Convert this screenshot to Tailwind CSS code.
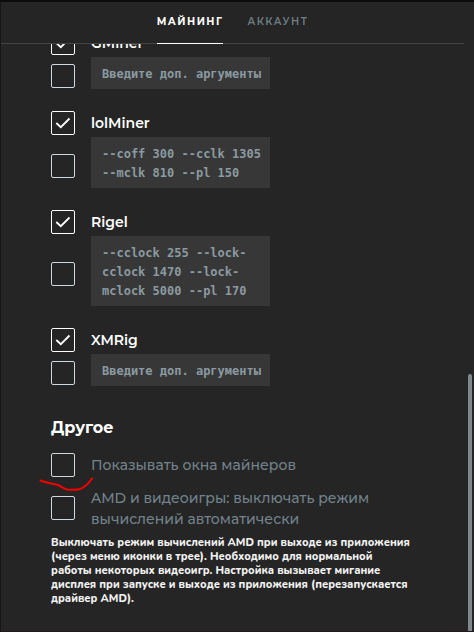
<!DOCTYPE html>
<html lang="ru">
<head>
<meta charset="utf-8">
<meta name="viewport" content="width=device-width, initial-scale=1">
<title>Настройки майнинга</title>
<script src="https://cdn.jsdelivr.net/npm/@tailwindcss/browser@4"></script>
</head>
<body class="bg-[#252525] font-['Montserrat','Inter',sans-serif] text-white">
<div class="relative flex h-screen flex-col overflow-hidden border-t-2 border-b border-l border-t-[#0b0b0b] border-b-[#21181b] border-l-[#171717]">
  <div class="absolute -top-0.5 right-20 h-0.5 w-3 rounded-t bg-[#252525]"></div>

  <header class="mr-2.5 shrink-0 border-b border-[#434343]">
    <nav class="-mb-px flex justify-center gap-6 text-[10px] leading-4 font-bold tracking-[0.15em]">
      <a href="#mining" class="border-b border-white pt-3 pb-[13px]">МАЙНИНГ</a>
      <a href="#account" class="pt-3 pb-[13px] font-semibold text-[#6f7f87]">АККАУНТ</a>
    </nav>
  </header>

  <main class="min-h-0 flex-1 overflow-hidden pr-12 pl-[50px]">
    <div class="-mt-[13px] flex flex-col gap-[22px]">
      <section class="flex flex-col gap-0.5">
        <div class="flex items-center gap-4">
          <span class="relative flex size-6 shrink-0">
            <input id="gminer" type="checkbox" checked class="size-6 appearance-none rounded-xs border border-white">
            <svg class="pointer-events-none absolute inset-0" viewBox="0 0 24 24" fill="none" stroke="#fff" stroke-width="1.8"><path d="M5.300 12 9.800 16.200 18.500 7.500"/></svg>
          </span>
          <label for="gminer" class="text-[14px] leading-6 font-semibold">GMiner</label>
        </div>
        <div class="flex items-center gap-4">
          <input type="checkbox" aria-label="Аргументы GMiner" class="mt-1.5 size-6 shrink-0 appearance-none rounded-xs border border-[#cfd8dc]">
          <textarea rows="1" aria-label="Доп. аргументы GMiner" placeholder="Введите доп. аргументы" class="block w-[179px] resize-none overflow-hidden bg-[#373737] pt-2 pr-1 pb-[5px] pl-[11px] font-['DejaVu_Sans_Mono',monospace] text-[12px] leading-[19px] font-bold text-[#8b9aa1] outline-none placeholder:text-[#8b9aa1]"></textarea>
        </div>
      </section>

      <section class="flex flex-col gap-0.5">
        <div class="flex items-center gap-4">
          <span class="relative flex size-6 shrink-0">
            <input id="lolminer" type="checkbox" checked class="size-6 appearance-none rounded-xs border border-white">
            <svg class="pointer-events-none absolute inset-0" viewBox="0 0 24 24" fill="none" stroke="#fff" stroke-width="1.8"><path d="M5.300 12 9.800 16.200 18.500 7.500"/></svg>
          </span>
          <label for="lolminer" class="text-[14px] leading-6 font-semibold">lolMiner</label>
        </div>
        <div class="flex items-center gap-4">
          <input type="checkbox" aria-label="Аргументы lolMiner" class="mt-1.5 size-6 shrink-0 appearance-none rounded-xs border border-[#cfd8dc]">
          <textarea rows="2" spellcheck="false" aria-label="Доп. аргументы lolMiner" class="block w-[179px] resize-none overflow-hidden bg-[#373737] pt-2 pr-1 pb-[5px] pl-[11px] font-['DejaVu_Sans_Mono',monospace] text-[12px] leading-[19px] font-bold text-[#8b9aa1] outline-none">--coff 300 --cclk 1305 --mclk 810 --pl 150</textarea>
        </div>
      </section>

      <section class="flex flex-col gap-0.5">
        <div class="flex items-center gap-4">
          <span class="relative flex size-6 shrink-0">
            <input id="rigel" type="checkbox" checked class="size-6 appearance-none rounded-xs border border-white">
            <svg class="pointer-events-none absolute inset-0" viewBox="0 0 24 24" fill="none" stroke="#fff" stroke-width="1.8"><path d="M5.300 12 9.800 16.200 18.500 7.500"/></svg>
          </span>
          <label for="rigel" class="text-[14px] leading-6 font-semibold">Rigel</label>
        </div>
        <div class="flex items-center gap-4">
          <input type="checkbox" aria-label="Аргументы Rigel" class="mt-1.5 size-6 shrink-0 appearance-none rounded-xs border border-[#cfd8dc]">
          <textarea rows="3" spellcheck="false" aria-label="Доп. аргументы Rigel" class="block w-[179px] resize-none overflow-hidden bg-[#373737] pt-2 pr-1 pb-[5px] pl-[11px] font-['DejaVu_Sans_Mono',monospace] text-[12px] leading-[19px] font-bold text-[#8b9aa1] outline-none">--cclock 255 --lock-cclock 1470 --lock-mclock 5000 --pl 170</textarea>
        </div>
      </section>

      <section class="flex flex-col gap-0.5">
        <div class="flex items-center gap-4">
          <span class="relative flex size-6 shrink-0">
            <input id="xmrig" type="checkbox" checked class="size-6 appearance-none rounded-xs border border-white">
            <svg class="pointer-events-none absolute inset-0" viewBox="0 0 24 24" fill="none" stroke="#fff" stroke-width="1.8"><path d="M5.300 12 9.800 16.200 18.500 7.500"/></svg>
          </span>
          <label for="xmrig" class="text-[14px] leading-6 font-semibold">XMRig</label>
        </div>
        <div class="flex items-center gap-4">
          <input type="checkbox" aria-label="Аргументы XMRig" class="mt-1.5 size-6 shrink-0 appearance-none rounded-xs border border-[#cfd8dc]">
          <textarea rows="1" aria-label="Доп. аргументы XMRig" placeholder="Введите доп. аргументы" class="block w-[179px] resize-none overflow-hidden bg-[#373737] pt-2 pr-1 pb-[5px] pl-[11px] font-['DejaVu_Sans_Mono',monospace] text-[12px] leading-[19px] font-bold text-[#8b9aa1] outline-none placeholder:text-[#8b9aa1]"></textarea>
        </div>
      </section>
    </div>

    <section class="pt-[30px]">
      <h2 class="text-[16px] leading-6 font-bold">Другое</h2>
      <div class="mt-[13px] flex items-center gap-4">
        <span class="relative flex size-6 shrink-0">
          <input id="windows" type="checkbox" class="size-6 appearance-none rounded-xs border border-[#cfd8dc]">
          <svg class="pointer-events-none absolute top-6 -left-3 h-4 w-14" viewBox="0 0 56 16" fill="none" stroke="#f50000" stroke-width="2" stroke-linecap="round" stroke-linejoin="round"><path d="M1.500 3.500C5 5 9 5.500 12 6.500C15 7 18 7.500 20 8.500C23 10 25 11.500 28 12.500C33 13 38 13 41 12C46 10 50 6 53 1.500"/></svg>
        </span>
        <label for="windows" class="text-[14px] leading-[21px] font-medium text-[#72838c]">Показывать окна майнеров</label>
      </div>
      <div class="mt-[9px] flex items-center gap-4">
        <input id="amd" type="checkbox" class="size-6 shrink-0 appearance-none rounded-xs border border-[#cfd8dc]">
        <label for="amd" class="pt-0.5 text-[14px] leading-[21px] font-medium text-[#72838c]">AMD и видеоигры: выключать режим<br>вычислений автоматически</label>
      </div>
      <p class="mt-1.5 font-['Nunito','Montserrat','Inter',sans-serif] text-[11px] leading-[14px] font-extrabold whitespace-nowrap text-[#f2f2f2]">Выключать режим вычислений AMD при выходе из приложения<br>(через меню иконки в трее). Необходимо для нормальной<br>работы некоторых видеоигр. Настройка вызывает мигание<br>дисплея при запуске и выходе из приложения (перезапускается<br>драйвер AMD).</p>
    </section>
  </main>

  <div class="absolute right-0.5 bottom-0 h-[257px] w-1 rounded-t-full bg-[#7f888d]"></div>
</div>
</body>
</html>
